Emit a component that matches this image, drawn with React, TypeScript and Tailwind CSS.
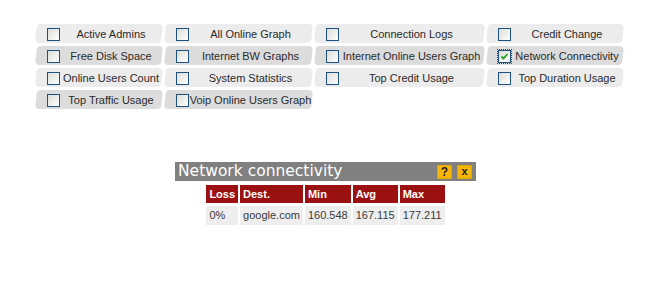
import React from "react";

type Item = { label: string; checked?: boolean };

const rows: Item[][] = [
  [{ label: "Active Admins" }, { label: "All Online Graph" }, { label: "Connection Logs" }, { label: "Credit Change" }],
  [
    { label: "Free Disk Space" },
    { label: "Internet BW Graphs" },
    { label: "Internet Online Users Graph" },
    { label: "Network Connectivity", checked: true },
  ],
  [{ label: "Online Users Count" }, { label: "System Statistics" }, { label: "Top Credit Usage" }, { label: "Top Duration Usage" }],
  [{ label: "Top Traffic Usage" }, { label: "Voip Online Users Graph" }],
];

const pings = [{ loss: "0%", dest: "google.com", min: "160.548", avg: "167.115", max: "177.211" }];

function Box({ checked }: { checked?: boolean }) {
  return (
    <span
      className={
        "flex h-[13px] w-[13px] shrink-0 items-center justify-center border border-[#1c5180] bg-gradient-to-br from-[#dcdcd7] to-white " +
        (checked ? "outline outline-1 outline-dotted outline-[#444] outline-offset-0" : "")
      }
    >
      {checked && (
        <svg width="9" height="9" viewBox="0 0 9 9">
          <path d="M1.5 4.5 L3.5 6.5 L7.5 2" fill="none" stroke="#21a121" strokeWidth="1.8" />
        </svg>
      )}
    </span>
  );
}

export default function App() {
  return (
    <div className="h-[286px] w-[654px] bg-white font-['Liberation_Sans',Arial,sans-serif]">
      <div className="grid grid-cols-[126px_147px_169px_136px] gap-[3px] pl-[36px] pt-[24px]">
        {rows.map((row, r) =>
          row.map((item) => (
            <div
              key={item.label}
              className={
                "h-[19px] -skew-x-6 rounded-[4px] " + (r % 2 === 0 ? "bg-[#ececec]" : "bg-[#dcdcdc]")
              }
            >
              <div className="flex h-full skew-x-6 items-center pl-[11px] pt-[1px] text-[11px] text-[#2a2a2a]">
                <Box checked={item.checked} />
                <span className="flex-1 whitespace-nowrap text-center">{item.label}</span>
              </div>
            </div>
          ))
        )}
      </div>

      <div className="ml-[175px] mt-[53px] w-[301px]">
        <div className="flex h-[19px] items-center justify-between bg-[#808080] pl-[3px] pr-[4px]">
          <span className="font-['DejaVu_Sans',Verdana,sans-serif] text-[15.5px] leading-none text-white">
            Network connectivity
          </span>
          <div className="flex gap-[5px]">
            <span className="flex h-[14px] w-[15px] items-center justify-center border border-[#e6a400] bg-[#f5b50a] text-[12px] font-bold text-[#222]">
              ?
            </span>
            <span className="flex h-[14px] w-[15px] items-center justify-center border border-[#e6a400] bg-[#f5b50a] text-[11px] font-bold text-[#222]">
              x
            </span>
          </div>
        </div>
        <table className="mx-auto mt-[1px] border-separate border-spacing-x-[2px] border-spacing-y-[3px] text-[11px]">
          <thead>
            <tr className="bg-[#9b1111] text-left text-white">
              <th className="h-[18px] px-[3px] font-bold">Loss</th>
              <th className="px-[3px] font-bold">Dest.</th>
              <th className="px-[3px] font-bold">Min</th>
              <th className="px-[3px] font-bold">Avg</th>
              <th className="px-[3px] font-bold">Max</th>
            </tr>
          </thead>
          <tbody>
            {pings.map((p) => (
              <tr key={p.dest} className="text-[#3a3a3a]">
                <td className="h-[19px] bg-[#eeeeee] px-[3px]">{p.loss}</td>
                <td className="bg-[#eeeeee] px-[3px]">{p.dest}</td>
                <td className="bg-[#eeeeee] px-[3px]">{p.min}</td>
                <td className="bg-[#eeeeee] px-[3px]">{p.avg}</td>
                <td className="bg-[#eeeeee] px-[3px]">{p.max}</td>
              </tr>
            ))}
          </tbody>
        </table>
      </div>
    </div>
  );
}
